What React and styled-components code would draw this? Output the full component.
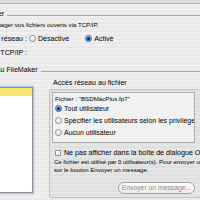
import React from 'react';
import styled, { createGlobalStyle } from 'styled-components';

const Global = createGlobalStyle`
  html, body {
    margin: 0;
    padding: 0;
  }
  body {
    width: 200px;
    height: 200px;
    overflow: hidden;
    font-family: 'Liberation Sans', 'DejaVu Sans', sans-serif;
    color: #000;
    background: repeating-linear-gradient(180deg, #efefef 0 2px, #e9e9e9 2px 4px);
  }
`

const Viewport = styled.div`
    width: 200px;
    height: 200px;
    overflow: hidden;
`

const TopStrip = styled.div`
    height: 3px;
    background: #dadada;
    border-bottom: 1px solid #b4b4b4;
`

/* the dialog is wider than the crop; its left part falls outside */
const Dialog = styled.div`
    width: 384px;
    margin-left: -170px;
    display: flex;
    flex-direction: column;
`

const Header = styled.div`
    display: flex;
    align-items: center;
    height: 8px;
    margin-top: ${p => p.$top}px;
    padding-left: ${p => p.$indent}px;
    font-size: 7.1px;
    line-height: 8px;
    white-space: nowrap;
`

const Rule = styled.div`
    flex: 1;
    height: 1px;
    margin: 3px 0 0 3px;
    background: #a9a9a9;
`

const Desc = styled.div`
    margin-top: 3px;
    padding-left: 76px;
    height: 7px;
    font-size: 6.1px;
    line-height: 7px;
    white-space: nowrap;
`

const FieldRow = styled.div`
    display: grid;
    grid-template-columns: 197px auto auto;
    justify-content: start;
    column-gap: 2px;
    align-items: center;
    height: 9px;
    margin-top: ${p => p.$top}px;
    font-size: 7.1px;
    white-space: nowrap;
`

const Label = styled.div`
    text-align: right;
`

const Option = styled.label`
    display: flex;
    align-items: center;
    gap: 2px;
    margin-right: ${p => p.$gap || 0}px;
`

const RadioDot = styled.span`
    width: 7px;
    height: 7px;
    box-sizing: border-box;
    border-radius: 50%;
    flex: none;
    border: 1px solid ${p => (p.$on ? '#3d67a3' : '#8e8e8e')};
    background: ${p =>
        p.$on
            ? 'radial-gradient(circle, #14213d 0 1.2px, transparent 1.6px), linear-gradient(#a9cbf2, #3f7fd6)'
            : 'linear-gradient(#ffffff, #e6e6e6)'};
`

const Box = styled.span`
    width: 6px;
    height: 6px;
    box-sizing: border-box;
    border: 1px solid #8e8e8e;
    border-radius: 1px;
    background: linear-gradient(#ffffff, #e9e9e9);
    flex: none;
`

const Bottom = styled.div`
    display: flex;
    margin-top: 5px;
`

const ListBox = styled.div`
    flex: none;
    margin: 8px 0 0 40px;
    width: 163px;
    height: 106px;
    box-sizing: border-box;
    background: #fff;
    border: 1px solid #8f8f8f;
    box-shadow: 0 0 0 1px #b2cbe9, 0 0 0 2px #d5e2f2;
`

const ListRow = styled.div`
    height: 8px;
    padding-left: 4px;
    font-size: 7.1px;
    line-height: 8px;
    background: ${p => (p.$selected ? '#f8e56e' : 'transparent')};
`

const Group = styled.div`
    flex: 1;
    min-width: 0;
    margin-left: 16px;
    display: flex;
    flex-direction: column;
`

const GroupLabel = styled.div`
    height: 8px;
    padding-left: 4px;
    font-size: 7.1px;
    line-height: 8px;
    white-space: nowrap;
`

const GroupBox = styled.div`
    margin-top: 2px;
    height: 109px;
    box-sizing: border-box;
    padding: 2px 18px 0 2px;
    background: rgba(0, 0, 0, 0.035);
    border: 1px solid #c2c2c2;
    border-radius: 2px;
    display: flex;
    flex-direction: column;
`

const Panel = styled.div`
    height: 51px;
    box-sizing: border-box;
    padding: 2px 0 0 2px;
    background: #f1f1f1;
    border: 1px solid #adadad;
    display: flex;
    flex-direction: column;
    font-size: 7px;
    white-space: nowrap;
    overflow: hidden;
`

const PanelLine = styled.div`
    height: 8px;
    line-height: 8px;
    margin-bottom: 1px;
    font-size: 6.2px;
`

const RadioList = styled.div`
    display: flex;
    flex-direction: column;
    gap: 4.3px;
`

const ChoiceRow = styled.div`
    display: flex;
    align-items: center;
    gap: 2px;
    height: 8px;
`

const CheckRow = styled.div`
    display: flex;
    align-items: center;
    gap: 3px;
    height: 8px;
    margin: 6px 0 0 3px;
    font-size: 7.1px;
    white-space: nowrap;
`

const Note = styled.div`
    margin: 2px 0 0 2px;
    font-size: 6px;
    line-height: 7.5px;
    white-space: nowrap;
`

const ButtonRow = styled.div`
    display: flex;
    justify-content: flex-end;
    margin-top: 8px;
`

const PillButton = styled.button`
    width: 77px;
    height: 12px;
    padding: 0;
    border: 1px solid #a2a2a2;
    border-radius: 6px;
    background: linear-gradient(#ffffff, #ececec);
    color: #8a8a8a;
    font-family: inherit;
    font-size: 6.8px;
    line-height: 10px;
    white-space: nowrap;
`

export default function App() {
    return (
        <Viewport>
            <Global />
            <TopStrip />
            <Dialog>
                <Header $top={6} $indent={147}>
                    Partager
                    <Rule />
                </Header>
                <Desc>Activez le partage réseau pour partager vos fichiers ouverts via TCP/IP.</Desc>
                <FieldRow $top={6}>
                    <Label>Partage réseau :</Label>
                    <Option $gap={14}>
                        <RadioDot />
                        Désactivé
                    </Option>
                    <Option>
                        <RadioDot $on />
                        Activé
                    </Option>
                </FieldRow>
                <FieldRow $top={5}>
                    <Label>Adresse TCP/IP :</Label>
                </FieldRow>
                <Header $top={9} $indent={150}>
                    Réseau FileMaker
                    <Rule />
                </Header>
                <Bottom>
                    <ListBox>
                        <ListRow $selected>BSDMacPlus</ListRow>
                    </ListBox>
                    <Group>
                        <GroupLabel>Accès réseau au fichier</GroupLabel>
                        <GroupBox>
                            <Panel>
                                <PanelLine>Fichier : "BSDMacPlus.fp7"</PanelLine>
                                <RadioList>
                                    <ChoiceRow>
                                        <RadioDot $on />
                                        Tout utilisateur
                                    </ChoiceRow>
                                    <ChoiceRow>
                                        <RadioDot />
                                        Spécifier les utilisateurs selon les privilèges
                                    </ChoiceRow>
                                    <ChoiceRow>
                                        <RadioDot />
                                        Aucun utilisateur
                                    </ChoiceRow>
                                </RadioList>
                            </Panel>
                            <CheckRow>
                                <Box />
                                Ne pas afficher dans la boîte de dialogue Ouvrir un fichier distant
                            </CheckRow>
                            <Note>
                                Ce fichier est utilisé par 0 utilisateur(s). Pour envoyer un message, cliquez
                                <br />
                                sur le bouton Envoyer un message.
                            </Note>
                            <ButtonRow>
                                <PillButton>Envoyer un message...</PillButton>
                            </ButtonRow>
                        </GroupBox>
                    </Group>
                </Bottom>
            </Dialog>
        </Viewport>
    );
}
